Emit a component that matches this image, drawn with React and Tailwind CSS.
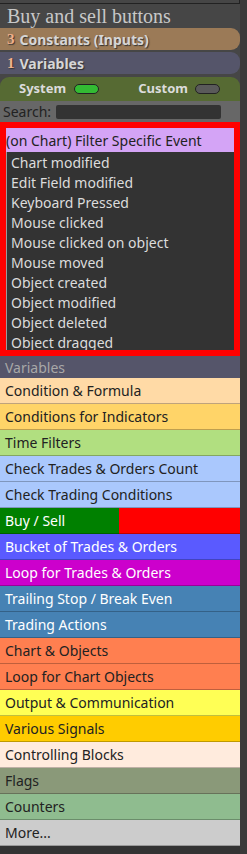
import React from "react";

const events = [
  "Chart modified",
  "Edit Field modified",
  "Keyboard Pressed",
  "Mouse clicked",
  "Mouse clicked on object",
  "Mouse moved",
  "Object created",
  "Object modified",
  "Object deleted",
  "Object dragged",
];

const categories = [
  { label: "Condition & Formula", cls: "bg-[#ffdaa6] text-[#222]" },
  { label: "Conditions for Indicators", cls: "bg-[#ffd468] text-[#222]" },
  { label: "Time Filters", cls: "bg-[#b1df80] text-[#222]" },
  { label: "Check Trades & Orders Count", cls: "bg-[#aac8fd] text-[#222]" },
  { label: "Check Trading Conditions", cls: "bg-[#aac8fd] text-[#222]" },
  { label: "Buy / Sell", cls: "bg-[linear-gradient(to_right,#008000_119px,#ff0000_119px)] text-white" },
  { label: "Bucket of Trades & Orders", cls: "bg-[#5a5aff] text-white" },
  { label: "Loop for Trades & Orders", cls: "bg-[#cc00cc] text-white" },
  { label: "Trailing Stop / Break Even", cls: "bg-[#4682b4] text-white" },
  { label: "Trading Actions", cls: "bg-[#4682b4] text-white" },
  { label: "Chart & Objects", cls: "bg-[#ff7f50] text-[#222]" },
  { label: "Loop for Chart Objects", cls: "bg-[#ff7f50] text-[#222]" },
  { label: "Output & Communication", cls: "bg-[#ffff55] text-[#222]" },
  { label: "Various Signals", cls: "bg-[#ffcc00] text-[#222]" },
  { label: "Controlling Blocks", cls: "bg-[#ffebdd] text-[#222]" },
  { label: "Flags", cls: "bg-[#8a9979] text-[#222]" },
  { label: "Counters", cls: "bg-[#8fbc8f] text-[#222]" },
  { label: "More...", cls: "bg-[#cccccc] text-[#222]" },
];

const sans = "font-['Noto_Sans','Open_Sans',sans-serif]";

function Toggle({ on }) {
  return (
    <span
      className={
        "inline-block h-[10px] w-[25px] rounded-full border border-[#222] " +
        (on ? "bg-[#33bb33]" : "bg-[#5a5a5a]")
      }
    />
  );
}

export default function App() {
  return (
    <div className="grid h-[854px] w-[247px] grid-cols-[240px_7px] overflow-hidden bg-[#464646]">
      <div className="flex min-w-0 flex-col">
        {/* tail of the box above */}
        <div className="h-[4px] border-r border-b border-[#222]" />

        <div className="flex h-[24px] items-center pl-[7px] font-['Liberation_Serif',serif] text-[20px] leading-none text-[#c8c8c8]">
          Buy and sell buttons
        </div>

        <div className={"flex h-[22px] items-center gap-[5px] rounded-r-[9px] bg-[#9b7a57] pl-[7px] text-[14px] font-bold text-[#d6d6d6] [text-shadow:1px_1px_1px_#333] " + sans}>
          <span className="font-['Liberation_Serif',serif] text-[15px] text-[#f2b08a]">3</span>
          Constants (Inputs)
        </div>

        <div className={"mt-[2px] flex h-[22px] items-center gap-[5px] rounded-r-[9px] bg-[#55556a] pl-[7px] text-[14px] font-bold text-[#d6d6d6] [text-shadow:1px_1px_1px_#333] " + sans}>
          <span className="font-['Liberation_Serif',serif] text-[15px] text-[#f2b08a]">1</span>
          Variables
        </div>

        <div className={"mt-[3px] flex h-[24px] items-center rounded-t-[9px] bg-[#566a33] pl-[19px] text-[13px] font-bold text-[#dcdcdc] " + sans}>
          <span>System</span>
          <span className="ml-[8px] flex"><Toggle on /></span>
          <span className="ml-[39px]">Custom</span>
          <span className="ml-[7px] flex"><Toggle /></span>
        </div>

        <div className={"flex h-[21px] items-center bg-[#676767] pl-[3px] text-[14px] text-[#222] " + sans}>
          Search:
          <div className="ml-[5px] h-[14px] w-[165px] rounded-[2px] bg-[#333]" />
        </div>

        <div className="h-[234px] border-[6px] border-[#ff0000] bg-[#333]">
          <div className="h-full overflow-hidden">
            <div className={"flex h-[24px] items-center bg-[#d4a4f6] text-[14px] whitespace-nowrap text-[#222] " + sans}>
              (on Chart) Filter Specific Event
            </div>
            <div className="border-l border-[#9a9a9a]">
              {events.map((e) => (
                <div
                  key={e}
                  className={"flex h-[20px] items-center pl-[4px] text-[14px] text-[#dcdcdc] " + sans}
                >
                  {e}
                </div>
              ))}
            </div>
          </div>
        </div>

        <div className={"flex h-[22px] items-center bg-[#55556a] pl-[5px] text-[14px] text-[#a8a8a8] " + sans}>
          Variables
        </div>

        {categories.map((c) => (
          <div
            key={c.label}
            className={
              "flex h-[26px] shrink-0 items-center border-b border-black/25 pl-[5px] text-[14px] " +
              sans +
              " " +
              c.cls
            }
          >
            {c.label}
          </div>
        ))}

        <div className="flex-1 bg-[#333]" />
      </div>
      <div className="bg-[#3a3a3a]" />
    </div>
  );
}
